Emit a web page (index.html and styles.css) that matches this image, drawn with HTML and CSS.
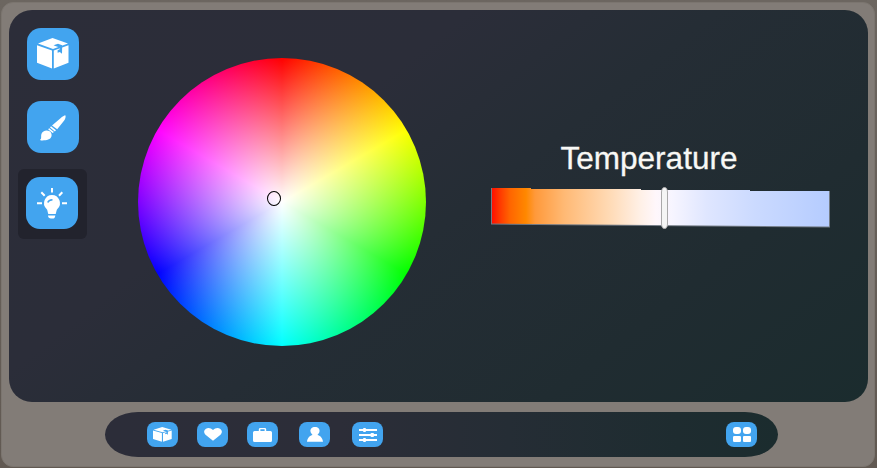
FILE: index.html
```html
<!DOCTYPE html>
<html lang="en">
<head>
<meta charset="utf-8">
<title>Light colour</title>
<link rel="stylesheet" href="styles.css">
</head>
<body>
<svg class="defs" aria-hidden="true">
  <symbol id="box" viewBox="0 0 32 31" preserveAspectRatio="none">
    <path d="M15.5 0 31 5.6 16 11 1 5.6ZM0 7.2 15 12.6V30.5L0 24.8ZM16.8 12.6 31.5 7.2V24.8L16.8 30.5Z"/>
    <path class="cut" d="M16.5 7.2 21 5.8 25.2 7.2 25 15.8 22.8 14 20.6 14.8V12.2L22.8 11.2V9.4L19 8.2Z"/>
  </symbol>
</svg>
<div class="frame">
  <main class="panel">
    <nav class="sidebar">
      <button class="tool"><svg class="i-box" width="32" height="31"><use href="#box"/></svg></button>
      <button class="tool"><svg class="i-brush" width="26" height="26" viewBox="0 0 26 26"><path d="M25.3.2C26 1.2 25.6 3.6 24 5.8L17.2 14.2 12 10.4 20.5 3.2C22.3 1.6 24.4.2 25.3.2ZM11 11.2 16 15.2 14.8 16.4 10 12.4ZM9.2 13.2 14 17 12.6 18 8.1 14.3ZM6.8 15.4C10.2 15.4 12.4 18.3 11.4 21.6 10.2 25 6 25.6.8 25.4 0 25.2 0 24.4.8 24.1 1.5 23.4.8 21 1.4 19 2.2 16.6 4.2 15.4 6.8 15.4Z"/></svg></button>
      <div class="selected"><button class="tool"><svg class="i-bulb" width="30" height="31" viewBox="0 0 30 31"><path d="M15 7A8.1 8.1 0 0 1 20.6 20.8C19.2 22.2 19.5 24 18.7 26H11.3C10.5 24 10.8 22.2 9.4 20.8A8.1 8.1 0 0 1 15 7ZM11 27.5H18.3C18 30 17.2 30.5 15.5 30.5H14C12.2 30.5 11.2 29.8 11 27.5Z"/><path class="rays" d="M15 0V4.6M4.3 4.3 7.7 7.8M25.3 4.3 22 7.8M0 15.2H5M25 15.2H30"/><path class="shine" d="M10.8 14.5C11.3 12.8 13 12 15.5 11.8"/></svg></button></div>
    </nav>
    <section class="wheel-area"><div class="wheel"><span class="picker"></span></div></section>
    <section class="temperature">
      <h1>Temperature</h1>
      <div class="slider"><div class="edge"><div class="track"></div></div><span class="thumb"></span></div>
    </section>
  </main>
  <footer class="dock">
    <button class="app"><svg width="19" height="15"><use href="#box"/></svg></button>
    <button class="app a2"><svg width="18" height="13" viewBox="0 0 18 13"><path d="M9 2C7 0 4-.6 2 .8-.6 2.5-.2 5 1.5 6.8L9 12.8 16.5 6.8C18.2 5 18.6 2.5 16 .8 14-.6 11 0 9 2Z"/></svg></button>
    <button class="app a3"><svg width="19" height="14" viewBox="0 0 18 14" preserveAspectRatio="none"><path fill-rule="evenodd" d="M5.5 3V1.2Q5.5 0 7 0H11Q12.5 0 12.5 1.2V3H16.5Q18 3 18 4.5V12.5Q18 14 16.5 14H1.5Q0 14 0 12.5V4.5Q0 3 1.5 3ZM7 1.3V3H11V1.3Z"/></svg></button>
    <button class="app a4"><svg width="16" height="15" viewBox="0 0 16 15"><path d="M8 0C11 0 13 2 12.5 4.5 12.2 6.2 11 7.2 10.5 8 13 8.8 15.5 10.5 16 14.7H0C.5 10.5 3 8.8 5.5 8 5 7.2 3.8 6.2 3.5 4.5 3 2 5 0 8 0Z"/></svg></button>
    <button class="app a5"><svg width="18" height="14" viewBox="0 0 18 14"><path d="M0 1H18V3H0ZM0 6H18V8H0ZM0 11H18V13H0Z"/><rect x="4" width="3" height="4" rx="1"/><rect x="11.5" y="5" width="3.5" height="4" rx="1"/><rect x="4" y="10" width="3" height="4" rx="1"/></svg></button>
    <button class="app a6"><svg width="18" height="15" viewBox="0 0 18 15"><rect width="8" height="7" rx="3"/><rect x="10" width="8" height="7" rx="3"/><rect y="9" width="8" height="6" rx="1.3"/><rect x="10" y="9" width="8" height="6" rx="1"/></svg></button>
  </footer>
</div>
</body>
</html>
```

FILE: styles.css
```css
* { box-sizing: border-box; }
body { margin: 0; width: 877px; height: 468px; overflow: hidden; padding: 2px 2px 1px 1px; background: linear-gradient(#6c6660, #615952); font-family: "Liberation Sans", Arial, sans-serif; }
button { border: 0; padding: 0; }
svg { display: block; fill: #fff; }
.defs { position: absolute; width: 0; height: 0; }
.cut { fill: #42a4ef; }
.frame { height: 465px; border-radius: 12px; background: #827c77; border: 1px solid #7b756f; padding: 7px 7px 0; }
.panel { height: 392px; width: 859px; display: flex; border-radius: 23px; background: linear-gradient(142deg, #2c2d39 0%, #2b2d39 34%, #252d35 52%, #202c31 76%, #1b2c2e 100%); }
.sidebar { width: 129px; padding: 18px 0 0 9px; display: flex; flex-direction: column; }
.tool { width: 52px; height: 52px; flex: none; margin: 0 0 21px 9px; border-radius: 14px; background: #42a4ef; display: grid; place-items: center; }
.i-box { margin-top: -1px; }
.i-brush { margin-top: 1px; }
.selected { width: 69px; height: 70px; margin-top: -5px; padding: 8px; border-radius: 6px; background: #22232d; }
.selected .tool { margin: 0; }
.i-bulb { margin-top: 1px; }
.rays { fill: none; stroke: #fff; stroke-width: 2; }
.shine { fill: none; stroke: #42a4ef; stroke-width: 1.5; }
.wheel-area { width: 353px; padding-top: 48px; }
.wheel { position: relative; width: 288px; height: 288px; border-radius: 50%; background: radial-gradient(circle closest-side, #fff, rgba(255,255,255,0)), conic-gradient(#f00, #ff0, #0f0, #0ff, #00f, #f0f, #f00); }
.picker { position: absolute; left: 129px; top: 133px; width: 14px; height: 15px; border: 1px solid #000; border-radius: 50%; }
.temperature { width: 340px; padding-top: 130px; }
h1 { margin: 0; padding-right: 24px; font-size: 31.5px; line-height: 36px; font-weight: 400; color: #f8f8f5; text-align: center; -webkit-text-stroke: .3px #f8f8f5; }
.slider { position: relative; margin-top: 12px; height: 40px; }
.edge { width: 339px; height: 40px; background: #737b85; clip-path: polygon(0 0, 40px 0, 40px 1px, 150px 1px, 150px 2px, 259px 2px, 259px 3px, 339px 3px, 339px 39.5px, 0 36.5px); }
.track { margin-left: 1px; width: 337px; height: 39px; background: linear-gradient(90deg, #ff1000 0, #ff3900 8px, #ff6500 18px, #ff8800 34px, #ff993a 43px, #ffb974 72px, #ffdcb9 120px, #fff0e6 148px, #fff7fb 164px, #f7f5ff 180px, #dfe6ff 215px, #cbdaff 263px, #b5ccff 337px); clip-path: polygon(0 0, 100% 0, 100% 38.5px, 0 35.5px); }
.thumb { position: absolute; left: 170px; top: -1px; width: 7px; height: 42px; border-radius: 4px / 6px; background: #f5f5f5; border: 1px solid #aaa9aa; }
.dock { width: 673px; height: 45px; margin: 10px 0 0 96px; padding: 10px 0 0 42px; display: flex; border-radius: 33px / 22.5px; background: linear-gradient(90deg, #2c2d39 0%, #2c2d38 35%, #252d35 60%, #1e2c30 85%, #1b2c2e 100%); }
.app { width: 31px; height: 25px; flex: none; display: grid; place-items: center; border-radius: 8px; background: #42a4ef; }
.a2, .a3 { margin-left: 19px; }
.a4 { margin-left: 21px; }
.a5 { margin-left: 22px; }
.a6 { margin-left: 343px; }
```
